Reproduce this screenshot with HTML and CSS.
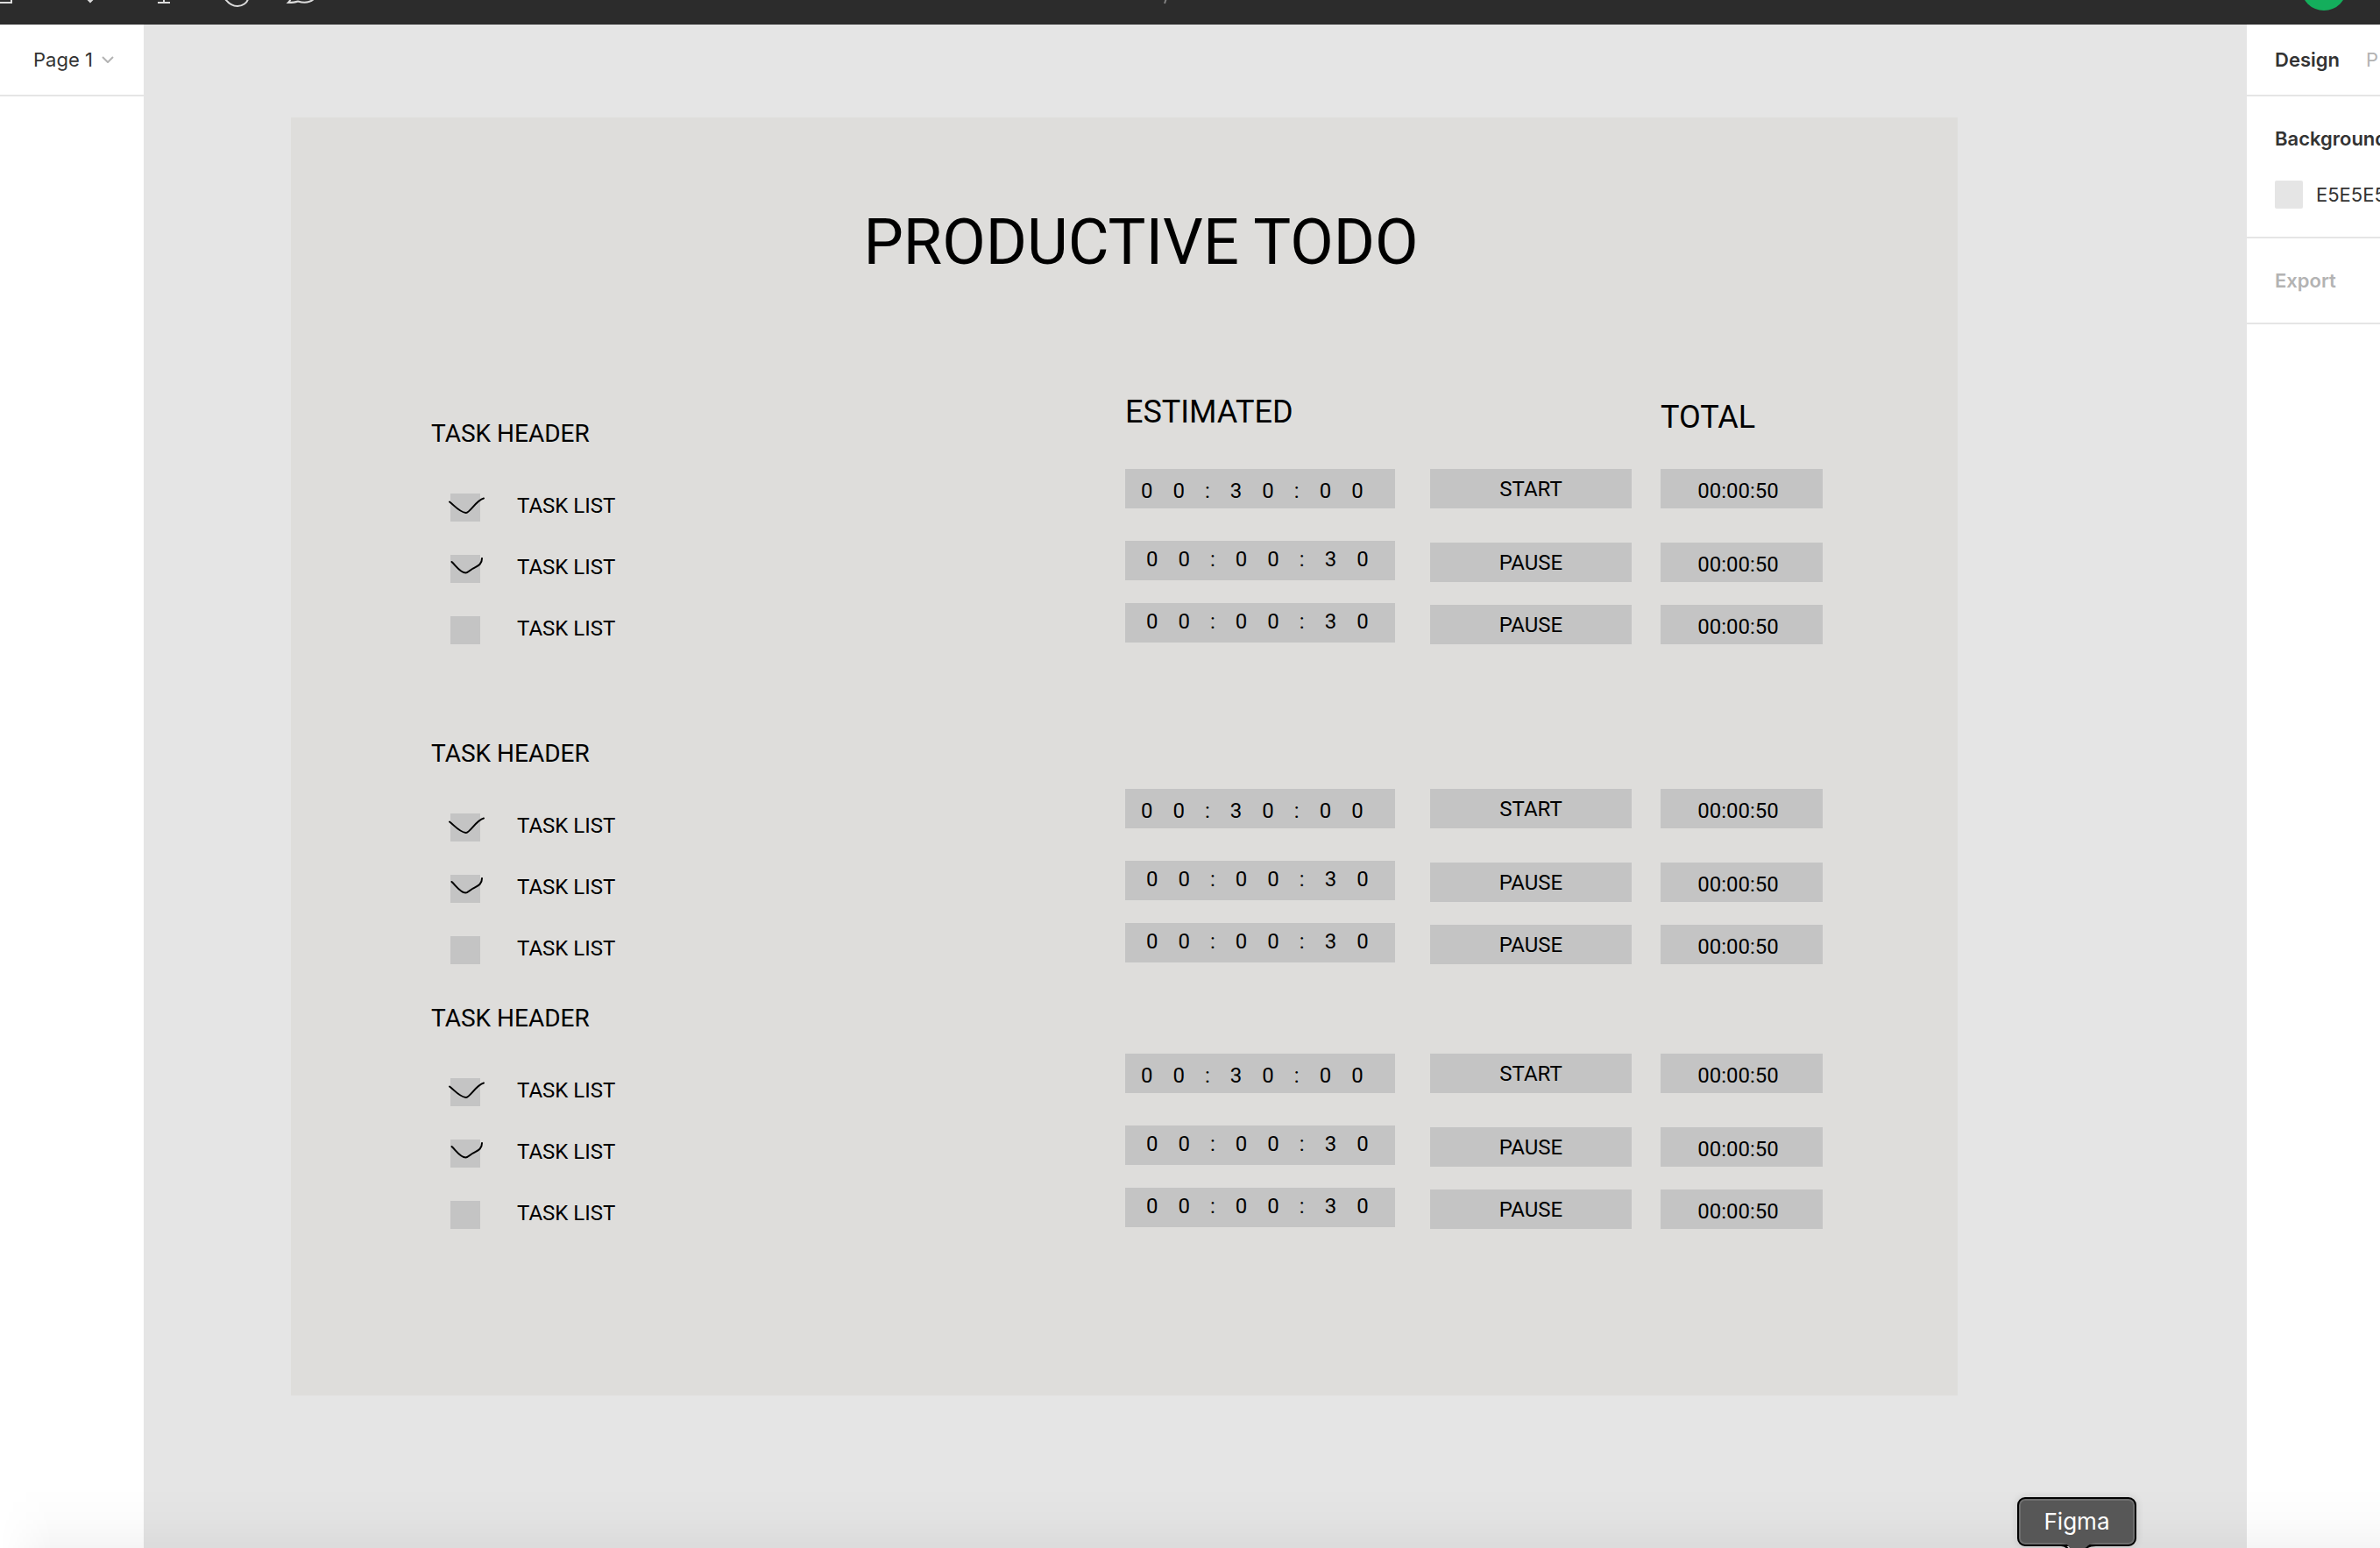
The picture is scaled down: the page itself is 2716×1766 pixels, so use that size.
FILE: index.html
```html
<!DOCTYPE html>
<html lang="en">
<head>
<meta charset="utf-8">
<title>Productive Todo</title>
<meta name="viewport" content="width=device-width, initial-scale=1">
<link rel="stylesheet" href="styles.css">
</head>
<body>
<svg class="defs" aria-hidden="true">
  <symbol id="tick-wide" viewBox="0 0 42 32"><path d="M1 9.500C7 14 12 21 19.500 22C24 22.500 31 8 40 5.500"/></symbol>
  <symbol id="tick-hook" viewBox="0 0 42 32"><path d="M3.500 8C8 12 13 20.500 19.500 20.500C22 20.500 24.500 17.500 27 16C32 13 38 12 38 4"/></symbol>
</svg>
<div class="app">
  <header class="toolbar">
    <div class="tools">
      <button class="tool tool-first" type="button" aria-label="Shape"><svg width="61" height="28" viewBox="0 0 61 28"><path d="M0 3H13V0"/></svg></button>
      <button class="tool" type="button" aria-label="Pen"><svg width="84" height="28" viewBox="0 0 84 28"><path d="M38 -2L42 2L46 -2"/></svg></button>
      <button class="tool" type="button" aria-label="Text"><svg width="84" height="28" viewBox="0 0 84 28"><path d="M35 3H49M42 0V3"/></svg></button>
      <button class="tool" type="button" aria-label="Hand"><svg width="84" height="28" viewBox="0 0 84 28"><path d="M28 -1C32 4 37 7 42 7C48 7 53 3 54 -1"/></svg></button>
      <button class="tool" type="button" aria-label="Comment"><svg width="84" height="28" viewBox="0 0 84 28"><path d="M19 -2Q18 1 16 3Q23 3 27 1.500Q38 5 45 -1"/></svg></button>
    </div>
    <svg class="crumb" width="60" height="28" viewBox="0 0 60 28" aria-hidden="true"><path d="M1 4L3 -2"/></svg>
    <svg class="avatar" width="52" height="12" viewBox="0 0 52 12" aria-hidden="true"><circle cx="26" cy="-14" r="26"/></svg>
  </header>
  <div class="workspace">
    <aside class="panel pages">
      <button class="page-picker" type="button">Page 1<svg width="14" height="8" viewBox="0 0 14 8" aria-hidden="true"><path d="M1 1L7 7L13 1"/></svg></button>
    </aside>
    <main class="canvas">
      <div class="board">
        <h1 class="title">PRODUCTIVE TODO</h1>

        <section class="group">
          <div class="tasks">
            <h2 class="task-header">TASK HEADER</h2>
            <label class="task"><span class="check"><input type="checkbox" checked><svg><use href="#tick-wide"/></svg></span><span class="task-name">TASK LIST</span></label>
            <label class="task"><span class="check"><input type="checkbox" checked><svg><use href="#tick-hook"/></svg></span><span class="task-name">TASK LIST</span></label>
            <label class="task"><span class="check"><input type="checkbox"></span><span class="task-name">TASK LIST</span></label>
          </div>
          <div class="times">
            <div class="columns heads"><h2 class="head">ESTIMATED</h2><h2 class="head head-total">TOTAL</h2></div>
            <div class="columns timers">
              <div class="estimate first"><span>0</span> <span>0</span> <span>:</span> <span>3</span> <span>0</span> <span>:</span> <span>0</span> <span>0</span></div>
              <button class="action first" type="button">START</button>
              <div class="total first">00:00:50</div>
              <div class="estimate"><span>0</span> <span>0</span> <span>:</span> <span>0</span> <span>0</span> <span>:</span> <span>3</span> <span>0</span></div>
              <button class="action" type="button">PAUSE</button>
              <div class="total">00:00:50</div>
              <div class="estimate"><span>0</span> <span>0</span> <span>:</span> <span>0</span> <span>0</span> <span>:</span> <span>3</span> <span>0</span></div>
              <button class="action" type="button">PAUSE</button>
              <div class="total">00:00:50</div>
            </div>
          </div>
        </section>

        <section class="group group-spaced">
          <div class="tasks">
            <h2 class="task-header">TASK HEADER</h2>
            <label class="task"><span class="check"><input type="checkbox" checked><svg><use href="#tick-wide"/></svg></span><span class="task-name">TASK LIST</span></label>
            <label class="task"><span class="check"><input type="checkbox" checked><svg><use href="#tick-hook"/></svg></span><span class="task-name">TASK LIST</span></label>
            <label class="task"><span class="check"><input type="checkbox"></span><span class="task-name">TASK LIST</span></label>
          </div>
          <div class="times">
            <div class="columns timers">
              <div class="estimate first"><span>0</span> <span>0</span> <span>:</span> <span>3</span> <span>0</span> <span>:</span> <span>0</span> <span>0</span></div>
              <button class="action first" type="button">START</button>
              <div class="total first">00:00:50</div>
              <div class="estimate"><span>0</span> <span>0</span> <span>:</span> <span>0</span> <span>0</span> <span>:</span> <span>3</span> <span>0</span></div>
              <button class="action" type="button">PAUSE</button>
              <div class="total">00:00:50</div>
              <div class="estimate"><span>0</span> <span>0</span> <span>:</span> <span>0</span> <span>0</span> <span>:</span> <span>3</span> <span>0</span></div>
              <button class="action" type="button">PAUSE</button>
              <div class="total">00:00:50</div>
            </div>
          </div>
        </section>

        <section class="group group-close">
          <div class="tasks">
            <h2 class="task-header">TASK HEADER</h2>
            <label class="task"><span class="check"><input type="checkbox" checked><svg><use href="#tick-wide"/></svg></span><span class="task-name">TASK LIST</span></label>
            <label class="task"><span class="check"><input type="checkbox" checked><svg><use href="#tick-hook"/></svg></span><span class="task-name">TASK LIST</span></label>
            <label class="task"><span class="check"><input type="checkbox"></span><span class="task-name">TASK LIST</span></label>
          </div>
          <div class="times">
            <div class="columns timers">
              <div class="estimate first"><span>0</span> <span>0</span> <span>:</span> <span>3</span> <span>0</span> <span>:</span> <span>0</span> <span>0</span></div>
              <button class="action first" type="button">START</button>
              <div class="total first">00:00:50</div>
              <div class="estimate"><span>0</span> <span>0</span> <span>:</span> <span>0</span> <span>0</span> <span>:</span> <span>3</span> <span>0</span></div>
              <button class="action" type="button">PAUSE</button>
              <div class="total">00:00:50</div>
              <div class="estimate"><span>0</span> <span>0</span> <span>:</span> <span>0</span> <span>0</span> <span>:</span> <span>3</span> <span>0</span></div>
              <button class="action" type="button">PAUSE</button>
              <div class="total">00:00:50</div>
            </div>
          </div>
        </section>
      </div>
    </main>
    <aside class="panel inspector">
      <div class="tabs">
        <button class="tab tab-active" type="button">Design</button>
        <button class="tab" type="button">P</button>
      </div>
      <section class="block">
        <h2 class="block-title">Background</h2>
        <div class="color"><span class="swatch"></span>E5E5E5</div>
      </section>
      <section class="block">
        <h2 class="block-title muted">Export</h2>
      </section>
    </aside>
  </div>
  <div class="dock-shadow"></div>
  <div class="tooltip" role="tooltip">Figma<svg class="tooltip-tail" width="40" height="6" viewBox="0 0 40 6" aria-hidden="true"><path class="tail-fill" d="M0 0H40Q33 0 28 6H10Q7 0 0 0Z"/><path class="tail-line" d="M0 3Q5 3 8 7M40 3Q31 3 28 7"/></svg></div>
</div>
</body>
</html>
```
FILE: styles.css
```css
* {
  box-sizing: border-box;
}

body {
  margin: 0;
  background: #e5e5e5;
  color: #000;
  font-family: Roboto, sans-serif;
}

h1,
h2 {
  margin: 0;
  font-weight: 400;
}

button {
  margin: 0;
  padding: 0;
  border: 0;
  background: none;
  color: inherit;
  font: inherit;
  cursor: pointer;
}

.defs {
  display: none;
}

.app {
  position: relative;
  display: flex;
  flex-direction: column;
  min-height: 100vh;
  overflow: hidden;
}

/* Toolbar */
.toolbar {
  display: grid;
  grid-template-columns: 1fr auto 1fr;
  height: 28px;
  background: #2c2c2c;
}

.tools {
  display: flex;
}

.tool svg {
  display: block;
  fill: none;
  stroke: #dcdcdc;
  stroke-width: 2;
}

.crumb {
  stroke: #808080;
  stroke-width: 2;
}

.avatar {
  justify-self: end;
  margin-right: 38px;
  fill: #14ae5c;
}

/* Side panels */
.workspace {
  display: flex;
  flex: 1;
}

.panel {
  flex: none;
  background: #fff;
  color: #333;
  font: 400 22px/32px Inter, sans-serif;
}

.pages {
  width: 164px;
}

.page-picker {
  display: flex;
  align-items: center;
  gap: 10px;
  width: 100%;
  height: 82px;
  padding-left: 38px;
  border-bottom: 2px solid #e5e5e5;
}

.page-picker svg {
  fill: none;
  stroke: #b3b3b3;
  stroke-width: 2;
}

.inspector {
  width: 152px;
  overflow: hidden;
}

.tabs {
  display: flex;
  align-items: center;
  gap: 30px;
  height: 82px;
  padding-left: 32px;
  border-bottom: 2px solid #e5e5e5;
}

.tab {
  color: #b3b3b3;
}

.tab-active {
  color: #333;
  font-weight: 600;
}

.block {
  display: flex;
  flex-direction: column;
  gap: 32px;
  padding: 32px 0 32px 32px;
  border-bottom: 2px solid #e5e5e5;
}

.block-title {
  font-size: 22px;
  font-weight: 600;
}

.muted {
  color: #b3b3b3;
}

.color {
  display: flex;
  gap: 15px;
}

.swatch {
  flex: none;
  width: 32px;
  height: 32px;
  border-radius: 2px;
  background: #e5e5e5;
}

/* Canvas and board */
.canvas {
  flex: 1;
  padding: 106px 330px 174px 168px;
}

.board {
  padding: 101px 154px 190px 160px;
  background: #dedddb;
}

.title {
  margin-bottom: 130px;
  padding-left: 32px;
  font-size: 72px;
  line-height: 84px;
  text-align: center;
}

.group {
  display: flex;
  align-items: flex-end;
  justify-content: space-between;
}

.group-spaced {
  margin-top: 109px;
}

.group-close {
  margin-top: 46px;
}

.tasks {
  display: flex;
  flex-direction: column;
  gap: 38px;
}

.task-header {
  margin-bottom: 14px;
  font-size: 28px;
  line-height: 32px;
}

.task {
  display: flex;
  gap: 42px;
  height: 32px;
  padding-left: 22px;
}

.task-name {
  font-size: 24px;
  line-height: 28px;
}

.check {
  position: relative;
  width: 34px;
  height: 32px;
}

.check input {
  display: block;
  width: 34px;
  height: 32px;
  margin: 0;
  appearance: none;
  background: #c4c4c4;
}

.check svg {
  position: absolute;
  top: 0;
  left: -2px;
  width: 42px;
  height: 32px;
  fill: none;
  stroke: #000;
  stroke-width: 2;
  stroke-linecap: round;
  pointer-events: none;
}

.columns {
  display: grid;
  grid-template-columns: 315px 230px 185px;
  column-gap: 33px;
}

.heads {
  height: 86px;
}

.head {
  font-size: 36px;
  line-height: 42px;
}

.head-total {
  grid-column: 3;
  padding-top: 6px;
}

.timers {
  grid-template-rows: 58px 47px 47px;
  row-gap: 24px;
  font-size: 24px;
  line-height: 28px;
}

.estimate,
.action,
.total {
  display: flex;
  align-items: center;
  justify-content: center;
  align-self: end;
  height: 45px;
  background: #c4c4c4;
}

.estimate {
  align-self: start;
  justify-content: flex-start;
  gap: 23px;
  width: 308px;
  padding: 0 0 4px 24px;
}

.estimate.first {
  padding: 4px 0 0 18px;
}

.total {
  padding: 4px 8px 0 0;
}

.first {
  align-self: start;
}

/* Dock shadow and tooltip along the bottom edge */
.dock-shadow {
  position: absolute;
  right: 0;
  bottom: 0;
  left: 0;
  height: 70px;
  background: linear-gradient(to bottom, rgba(0, 0, 0, 0), rgba(0, 0, 0, 0.012) 50%, rgba(0, 0, 0, 0.04));
  -webkit-mask-image: linear-gradient(to right, transparent, #000 60px);
  mask-image: linear-gradient(to right, transparent, #000 60px);
  pointer-events: none;
}

.tooltip {
  position: absolute;
  right: 278px;
  bottom: 2px;
  width: 136px;
  height: 56px;
  border: 2px solid #000;
  border-radius: 9px;
  background: #575757;
  box-shadow: inset 0 0 0 2px #6e6e6e, 0 0 10px rgba(0, 0, 0, 0.12);
  color: #fff;
  font: 400 26px/52px Inter, sans-serif;
  text-align: center;
}

.tooltip-tail {
  position: absolute;
  bottom: -4px;
  left: 48px;
}

.tail-fill {
  fill: #575757;
}

.tail-line {
  fill: none;
  stroke: #000;
  stroke-width: 2;
}
```
